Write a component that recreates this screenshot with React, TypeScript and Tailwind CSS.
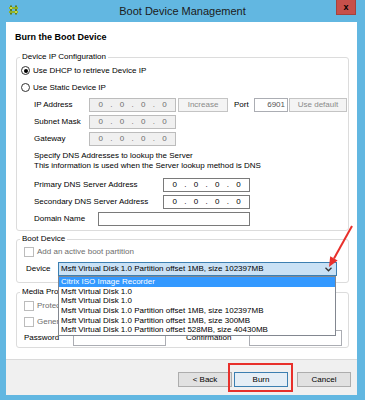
import React from "react";

function IpBox({ disabled, className = "" }: { disabled?: boolean; className?: string }) {
  const cls = disabled
    ? "bg-[#f0f0f0] border-[#bcbcbc] text-[#6d6d6d]"
    : "bg-white border-[#7a7a7a] text-black";
  const Dig = () => <span className="flex-1 text-center">0</span>;
  const Dot = () => <span className="w-0 flex justify-center">.</span>;
  return (
    <div className={`h-[14px] flex items-center border ${cls} ${className}`}>
      <Dig />
      <Dot />
      <Dig />
      <Dot />
      <Dig />
      <Dot />
      <Dig />
    </div>
  );
}

function Radio({ checked }: { checked?: boolean }) {
  return (
    <span className="w-[9px] h-[9px] rounded-full border border-[#333] bg-white flex items-center justify-center shrink-0">
      {checked && <span className="w-[4px] h-[4px] rounded-full bg-black" />}
    </span>
  );
}

function Check() {
  return <span className="w-[10px] h-[10px] border border-[#bcbcbc] bg-white shrink-0" />;
}

function Btn({ children, className = "" }: { children: React.ReactNode; className?: string }) {
  return (
    <div className={`flex items-center justify-center border ${className}`}>{children}</div>
  );
}

export default function App() {
  const items = [
    "Citrix ISO Image Recorder",
    "Msft Virtual Disk 1.0",
    "Msft Virtual Disk 1.0",
    "Msft Virtual Disk 1.0 Partition offset 1MB, size 102397MB",
    "Msft Virtual Disk 1.0 Partition offset 1MB, size 300MB",
    "Msft Virtual Disk 1.0 Partition offset 528MB, size 40430MB",
  ];
  return (
    <div className="w-[365px] h-[400px] bg-[#62b7e1] relative overflow-hidden font-['Liberation_Sans',Arial,sans-serif] text-[8px] leading-[10px] text-black">
      {/* Title bar */}
      <div className="h-[22px] flex items-start">
        <div className="w-[29px] pl-[9px] pt-[5px]">
          <svg width="9" height="10" viewBox="0 0 9 10">
            <rect x="1" y="0.5" width="2" height="9" fill="#5d7d1c" />
            <rect x="6" y="0.5" width="2" height="9" fill="#5d7d1c" />
            <rect x="0" y="2" width="9" height="2" fill="#8fb12c" />
            <rect x="0" y="6" width="9" height="2" fill="#8fb12c" />
            <rect x="1" y="2" width="2" height="2" fill="#c9d84a" />
            <rect x="6" y="6" width="2" height="2" fill="#c9d84a" />
          </svg>
        </div>
        <div className="flex-1 text-center text-[11px] leading-[22px] text-[#1b1b1b]">
          Boot Device Management
        </div>
        <div className="w-[29px] flex justify-start">
          <div className="w-[20px] h-[15px] bg-[#c7504b] border border-[#a5423d] border-t-0 flex items-center justify-center text-[9px] font-bold leading-[9px] text-black">
            x
          </div>
        </div>
      </div>

      {/* Window body */}
      <div className="ml-[6px] mr-[8px] h-[373px] flex flex-col">
        <div className="h-[337px] bg-white flex flex-col pl-[10px] pr-[8px]">
          <div className="mt-[9px] -ml-[1px] text-[9px] leading-[12px] font-bold">Burn the Boot Device</div>

          {/* Device IP Configuration */}
          <fieldset className="mt-[9px] border border-[#dcdcdc] rounded-[3px] pb-[3px]">
            <legend className="ml-[3px] px-[2px] leading-[10px]">Device IP Configuration</legend>
            <div className="h-[17px] flex items-center pl-[4px] gap-[3px]">
              <Radio checked />
              <span>Use DHCP to retrieve Device IP</span>
            </div>
            <div className="h-[17px] flex items-center pl-[4px] gap-[3px]">
              <Radio />
              <span>Use Static Device IP</span>
            </div>
            <div className="h-[17px] flex items-center pl-[17px]">
              <span className="w-[55px]">IP Address</span>
              <IpBox disabled className="w-[87px]" />
              <Btn className="ml-[2px] w-[50px] h-[14px] bg-[#f4f4f4] border-[#c4c4c4] text-[#8a8a8a]">Increase</Btn>
              <span className="ml-[6px] w-[20px]">Port</span>
              <div className="w-[34px] h-[14px] border border-[#abadb3] bg-white text-right pr-[2px] leading-[12px] text-[#555]">6901</div>
              <Btn className="ml-[1px] w-[58px] h-[14px] bg-[#f4f4f4] border-[#c4c4c4] text-[#8a8a8a]">Use default</Btn>
            </div>
            <div className="h-[17px] flex items-center pl-[17px]">
              <span className="w-[55px]">Subnet Mask</span>
              <IpBox disabled className="w-[87px]" />
            </div>
            <div className="h-[17px] flex items-center pl-[17px]">
              <span className="w-[55px]">Gateway</span>
              <IpBox disabled className="w-[87px]" />
            </div>
            <div className="mt-[4px] pl-[17px]">
              <div>Specify DNS Addresses to lookup the Server</div>
              <div>This information is used when the Server lookup method is DNS</div>
            </div>
            <div className="mt-[5px] h-[17px] flex items-center pl-[17px]">
              <span className="w-[129px]">Primary DNS Server Address</span>
              <IpBox className="w-[87px]" />
            </div>
            <div className="h-[17px] flex items-center pl-[17px]">
              <span className="w-[129px]">Secondary DNS Server Address</span>
              <IpBox className="w-[87px]" />
            </div>
            <div className="h-[17px] flex items-center pl-[17px]">
              <span className="w-[64px]">Domain Name</span>
              <div className="w-[152px] h-[14px] border border-[#7a7a7a] bg-white" />
            </div>
          </fieldset>

          {/* Boot Device */}
          <fieldset className="mt-[3px] border border-[#dcdcdc] rounded-[3px] pb-[6px]">
            <legend className="ml-[3px] px-[2px] leading-[10px]">Boot Device</legend>
            <div className="mt-[2px] h-[11px] flex items-center pl-[7px] gap-[3px]">
              <Check />
              <span className="text-[#6d6d6d]">Add an active boot partition</span>
            </div>
            <div className="mt-[5px] h-[14px] flex items-center pl-[9px]">
              <span className="w-[32px]">Device</span>
              <div className="w-[279px] h-[14px] border border-[#3c7fb1] bg-[#c9e1f5] flex items-center pl-[2px] pr-[4px]">
                <span className="flex-1">Msft Virtual Disk 1.0 Partition offset 1MB, size 102397MB</span>
                <svg width="7" height="5" viewBox="0 0 7 5">
                  <polyline points="0.5,0.8 3.5,3.8 6.5,0.8" fill="none" stroke="#333" strokeWidth="1.3" />
                </svg>
              </div>
            </div>
          </fieldset>

          {/* Media Protection */}
          <fieldset className="mt-[4px] border border-[#dcdcdc] rounded-[3px] pb-[1px]">
            <legend className="ml-[3px] px-[2px] leading-[10px]">Media Protection</legend>
            <div className="mt-[3px] h-[11px] flex items-center pl-[7px] gap-[3px]">
              <Check />
              <span className="text-[#6d6d6d]">Protect the boot device with a password</span>
            </div>
            <div className="mt-[5px] h-[11px] flex items-center pl-[7px] gap-[3px]">
              <Check />
              <span className="text-[#6d6d6d]">Generate a random password</span>
            </div>
            <div className="mt-[2px] h-[17px] flex items-center pl-[7px]">
              <span className="w-[49px]">Password</span>
              <div className="w-[93px] h-[16px] border border-[#abadb3] bg-white" />
              <span className="ml-[20px] w-[63px]">Confirmation</span>
              <div className="w-[93px] h-[16px] border border-[#abadb3] bg-white" />
            </div>
          </fieldset>
        </div>

        {/* Footer */}
        <div className="h-[36px] bg-[#f0f0f0] border-t border-[#dadada] flex justify-end items-start pt-[12px] pr-[6px]">
          <Btn className="w-[54px] h-[15px] bg-[#e1e1e1] border-[#adadad]">&lt; Back</Btn>
          <Btn className="ml-[2px] w-[54px] h-[15px] bg-[#e5eef6] border-[#3c7fb1]">Burn</Btn>
          <Btn className="ml-[9px] w-[54px] h-[15px] bg-[#e1e1e1] border-[#adadad]">Cancel</Btn>
        </div>
      </div>

      {/* Open dropdown list */}
      <div className="absolute left-[58px] top-[276px] w-[278px] border border-[#828790] bg-white">
        {items.map((t, i) => (
          <div
            key={i}
            className={`h-[9.7px] leading-[9.7px] pl-[2px] ${i === 0 ? "bg-[#3399ff] text-white" : ""}`}
          >
            {t}
          </div>
        ))}
      </div>

      {/* Red highlight on Burn */}
      <div className="absolute left-[228px] top-[363px] w-[65px] h-[29px] border-2 border-[#e8302b]" />

      {/* Red arrow */}
      <svg className="absolute left-0 top-0" width="365" height="400" viewBox="0 0 365 400">
        <line x1="352" y1="226" x2="334" y2="258.5" stroke="#e8302b" strokeWidth="2" />
        <polygon points="329,267 337.6,260.4 330.2,256.2" fill="#e8302b" />
      </svg>
    </div>
  );
}
